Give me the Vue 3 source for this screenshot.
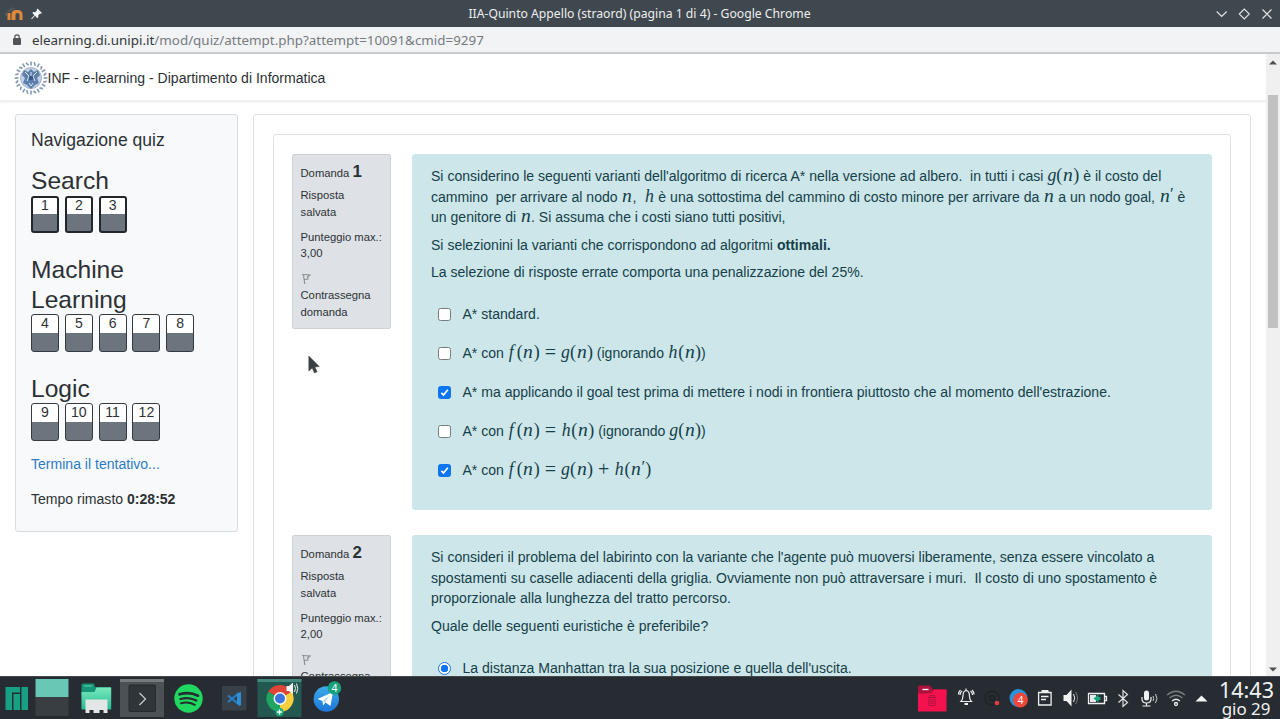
<script setup>
const groups = [
  { name: 'Search', items: [1, 2, 3], current: true },
  { name: 'Machine Learning', items: [4, 5, 6, 7, 8] },
  { name: 'Logic', items: [9, 10, 11, 12] },
]
const petals = Array.from({ length: 24 }, (_, i) => i * 15)
</script>

<template>
  <div class="screen">
    <header class="titlebar">
      <svg class="moodle" viewBox="0 0 20 16"><path d="M2 5 L9 1 L11 3 L5 6" fill="#555" /><path d="M2 6v4" stroke="#666" /><path d="M5 14V7M9 14V8.5Q9 5.5 12 5.5M10 14V8.5Q10 5.5 13.5 5.5T17 8.5V14" fill="none" stroke="#e0883a" stroke-width="3" /></svg>
      <svg class="pin" viewBox="0 0 12 12"><path d="M7 0l5 5-1.4.7-.7-.3-2 2 .1 2-1.1 1.1-2.5-2.5L1 11.8.2 11l3.6-3.6L1.4 5l1.1-1.1 2.1.1 2-2-.3-.8z" fill="#f2f3f4" /></svg>
      <span class="wintitle">IIA-Quinto Appello (straord) (pagina 1 di 4) - Google Chrome</span>
      <svg class="winbtns" viewBox="0 0 56 12" fill="none" stroke="#e3e5e6" stroke-width="1.1"><path d="M.7 3.5l5 5 5-5M23.3 6l5-5 5 5-5 5zM46.5 1.5l9 9M55.500 1.500l-9 9" /></svg>
    </header>
    <div class="urlbar">
      <svg class="lock" viewBox="0 0 8 11"><path d="M1.800 5V3a2.200 2.200 0 0 1 4.400 0v2" fill="none" stroke="#505357" stroke-width="1.200" /><rect y="4" width="8" height="7" rx="1" fill="#505357" /></svg>
      <span class="url"><b>elearning.di.unipi.it</b>/mod/quiz/attempt.php?attempt=10091&amp;cmid=9297</span>
    </div>

    <div class="viewport">
      <div class="page">
        <nav class="sitebar">
          <svg class="seal" viewBox="0 0 34 34">
            <g stroke="#8298b8" stroke-width="1.600" fill="none">
              <path v-for="a in petals" :key="a" :transform="`rotate(${a} 17 17)`" :d="a % 30 ? 'M16 1l2 3' : 'M17 .5v4'" />
            </g>
            <circle cx="17" cy="17" r="10.500" fill="#c3d1e2" stroke="#8fa6c6" stroke-width=".8" />
            <path d="M17 8l3 3 4-2 2 5-3 3 2 5-4 2-4 4-4-4-4-2 2-5-3-3 2-5 4 2z" fill="#5c7fac" />
            <path d="M11 11l4 4-2 5M23 11l-4 4 2 5M17 11v4M15 22l2 3 2-3" stroke="#dce7f3" fill="none" />
            <circle cx="17" cy="17" r="2.200" fill="#34588a" />
          </svg>
          <span>INF - e-learning - Dipartimento di Informatica</span>
        </nav>

        <div class="columns">
          <aside class="quiznav">
            <h5>Navigazione quiz</h5>
            <section v-for="g in groups" :key="g.name">
              <h3>{{ g.name }}</h3>
              <div class="btns" :class="{ current: g.current }">
                <a v-for="n in g.items" :key="n"><span>{{ n }}</span></a>
              </div>
            </section>
            <p class="finish">Termina il tentativo...</p>
            <p class="timer">Tempo rimasto <b>0:28:52</b></p>
          </aside>

          <div class="outer">
            <main class="inner">
              <div class="question first">
                <div class="info">
                  <div class="no">Domanda <b>1</b></div>
                  <div class="state">Risposta<br>salvata</div>
                  <div class="grade">Punteggio max.:<br>3,00</div>
                  <svg class="flag" viewBox="0 0 10 12"><path d="M1 1.500l8 .5-2.500 2L7 6l-4 .5M2.500 2.200L3.800 11" fill="none" stroke="#8b8d90" stroke-width="1.100" /></svg>
                  <div>Contrassegna<br>domanda</div>
                </div>
                <div class="formulation">
                  <p>
                    <span class="ln">Si considerino le seguenti varianti dell'algoritmo di ricerca A* nella versione ad albero.&nbsp; in tutti i casi <i>g</i><u>(</u><i class="n">n</i><u>)</u> è il costo del</span>
                    <span class="ln">cammino&nbsp; per arrivare al nodo <i class="n">n</i>,&nbsp; <i class="h">h</i> è una sottostima del cammino di costo minore per arrivare da <i class="n">n</i> a un nodo goal, <i class="n">n</i><sup>′</sup> è</span>
                    <span class="ln">un genitore di <i class="n">n</i>. Si assuma che i costi siano tutti positivi,</span>
                  </p>
                  <p><span class="ln">Si selezionini la varianti che corrispondono ad algoritmi <b>ottimali.</b></span></p>
                  <p><span class="ln">La selezione di risposte errate comporta una penalizzazione del 25%.</span></p>
                  <div class="answers">
                    <div class="ans"><span class="box"></span><span class="ln">A* standard.</span></div>
                    <div class="ans"><span class="box"></span><span class="ln">A* con <i class="f">f</i><u>(</u><i class="n">n</i><u>)</u><u class="op">=</u><i>g</i><u>(</u><i class="n">n</i><u>)</u> (ignorando <i class="h">h</i><u>(</u><i class="n">n</i><u>)</u>)</span></div>
                    <div class="ans"><span class="box on"><svg viewBox="0 0 12 12"><path d="M2.500 6.300l2.400 2.400L9.600 3" /></svg></span><span class="ln">A* ma applicando il goal test prima di mettere i nodi in frontiera piuttosto che al momento dell'estrazione.</span></div>
                    <div class="ans"><span class="box"></span><span class="ln">A* con <i class="f">f</i><u>(</u><i class="n">n</i><u>)</u><u class="op">=</u><i class="h">h</i><u>(</u><i class="n">n</i><u>)</u> (ignorando <i>g</i><u>(</u><i class="n">n</i><u>)</u>)</span></div>
                    <div class="ans"><span class="box on"><svg viewBox="0 0 12 12"><path d="M2.500 6.300l2.400 2.400L9.600 3" /></svg></span><span class="ln">A* con <i class="f">f</i><u>(</u><i class="n">n</i><u>)</u><u class="op">=</u><i>g</i><u>(</u><i class="n">n</i><u>)</u><u class="op plus">+</u><i class="h">h</i><u>(</u><i class="n">n</i><sup>′</sup><u>)</u></span></div>
                  </div>
                </div>
              </div>

              <div class="question">
                <div class="info">
                  <div class="no">Domanda <b>2</b></div>
                  <div class="state">Risposta<br>salvata</div>
                  <div class="grade">Punteggio max.:<br>2,00</div>
                  <svg class="flag" viewBox="0 0 10 12"><path d="M1 1.500l8 .5-2.500 2L7 6l-4 .5M2.500 2.200L3.800 11" fill="none" stroke="#8b8d90" stroke-width="1.100" /></svg>
                  <div>Contrassegna</div>
                </div>
                <div class="formulation second">
                  <p>
                    <span class="ln">Si consideri il problema del labirinto con la variante che l'agente può muoversi liberamente, senza essere vincolato a</span>
                    <span class="ln">spostamenti su caselle adiacenti della griglia. Ovviamente non può attraversare i muri.&nbsp; Il costo di uno spostamento è</span>
                    <span class="ln">proporzionale alla lunghezza del tratto percorso.</span>
                  </p>
                  <p><span class="ln">Quale delle seguenti euristiche è preferibile?</span></p>
                  <div class="answers">
                    <div class="ans"><span class="radio"></span><span class="ln last">La distanza Manhattan tra la sua posizione e quella dell'uscita.</span></div>
                  </div>
                </div>
              </div>
            </main>
          </div>
        </div>
      </div>
      <div class="scroll">
        <svg viewBox="0 0 8 5"><path d="M0 4.500L4 .500l4 4z" /></svg>
        <div class="thumb"></div>
        <svg class="down" viewBox="0 0 8 5"><path d="M0 .500h8l-4 4z" /></svg>
      </div>
    </div>

    <svg class="cursor" viewBox="0 0 12 19"><path d="M.8 1v15l3.400-3 2.300 5 2.600-1.200-2.200-4.700 4.400-.6z" fill="#3d4043" stroke="#3d4043" stroke-width=".5" /></svg>

    <footer class="taskbar">
      <svg viewBox="0 0 1280 43" width="1280" height="43">
        <rect width="1280" height="43" fill="#262c31" />
        <rect width="1280" height="1" fill="#45484b" />
        <g fill="#18a085"><path d="M5.500 11h14.500v5.500h-8v17.500h-6.500z" /><path d="M13.500 18h6.500v16h-6.500zM21.500 11H28v23h-6.500z" /></g>
        <rect x="35.500" y="3" width="33" height="18" fill="#69c8b5" /><rect x="35.500" y="21" width="33" height="19" fill="#393e43" />
        <linearGradient id="fold" x2="0" y2="1"><stop stop-color="#7ae8bd" /><stop offset="1" stop-color="#25bd91" /></linearGradient>
        <path d="M81.500 9q0-1.500 1.500-1.500h11l1 3.500h16v9H81.500z" fill="#159477" /><path d="M84 10h8" stroke="#65ddb5" />
        <path d="M81.500 16h13l2-4.500h14.700v22H81.500z" fill="url(#fold)" /><path d="M85.500 23.500h22v13.500h-4v-3h-4v3h-6v-3h-4v3h-4z" fill="#e3e6e6" />
        <rect x="120" y="3" width="44" height="38" fill="#4c5156" /><rect x="120" y="3" width="44" height="3" fill="#757a7d" />
        <rect x="129" y="9" width="26.500" height="26.500" rx="1" fill="#303539" stroke="#252a2d" /><path d="M139.500 17l6 6-6 6" fill="none" stroke="#c5c8ca" stroke-width="1.300" />
        <circle cx="188.500" cy="22.500" r="14.200" fill="#20d760" /><g fill="none" stroke="#262c31" stroke-linecap="round"><path d="M179.500 18.300q10-3 18.500 1.400" stroke-width="2.700" /><path d="M180.500 23q8.500-2.300 15.800 1.500" stroke-width="2.300" /><path d="M181 27.300q7-2 13.800 1.500" stroke-width="2" /></g>
        <rect x="222" y="10" width="24.500" height="24.500" rx="1" fill="#394148" /><path d="M239 17v11.500L228 19.500M239 17L228 26" fill="none" stroke="#2382cd" stroke-width="2" /><path d="M237 17.500l4-1.500v13.500L237 28z" fill="#2f8fd8" />
        <rect x="257.500" y="3" width="44" height="38" fill="#22584f" /><rect x="257.500" y="3" width="44" height="3" fill="#42897b" />
        <path d="M280 22.500L268.300 15.700A13.500 13.500 0 0 1 291.700 15.700z" fill="#e04437" />
        <path d="M280 22.500L291.700 15.700A13.500 13.500 0 0 1 280 36z" fill="#f9ce3b" />
        <path d="M280 22.500L280 36A13.500 13.500 0 0 1 268.300 15.700z" fill="#20a460" />
        <circle cx="280" cy="22.500" r="6.500" fill="#f4f7f7" /><circle cx="280" cy="22.500" r="5" fill="#3975dc" />
        <path d="M286.500 10h2.500l4-3.500v12L289 15h-2.500z" fill="#f4f6f6" /><path d="M294.500 9q2 3.500 0 7M296.500 7.500q2.500 5 0 10" stroke="#eee" fill="none" />
        <circle cx="279.500" cy="36" r="4.200" fill="#1aab78" /><path d="M277 36h5M279.500 33.500v5" stroke="#fff" stroke-width="1.300" />
        <linearGradient id="tg" x2="0" y2="1"><stop stop-color="#3cace8" /><stop offset="1" stop-color="#1c76db" /></linearGradient>
        <circle cx="326.300" cy="23" r="12.700" fill="url(#tg)" /><path d="M317.500 23L333 16l-2.500 14-5-3.500-2.500 3-.5-4.500z" fill="#fff" /><path d="M322.500 25l7-5.500-4.500 7" fill="#b6d7f1" />
        <circle cx="334.500" cy="12" r="6.700" fill="#17a27d" /><text x="334.500" y="16" class="num" font-size="10.500">4</text>

        <path d="M918 10.500q0-1 1-1h11l3 4h13.500v7H918z" fill="#ad123e" /><path d="M918 17.500h13l3-4h12.500v22H918z" fill="#f3124e" /><path d="M922.500 13.500h6" stroke="#fff" stroke-width="1.400" /><path d="M928 21.500h8M930 21v-1.500h4V21M929 22.500v7h6v-7M931 23v5M933 23v5" stroke="#ad123e" fill="none" />
        <g fill="none" stroke="#eef0f1" stroke-width="1.200">
          <path d="M961 25.500q2-2 2-6 0-4.500 3.200-5 3.200.5 3.200 5 0 4 2 6zM966 12.500v2M962 15q-2 1.500-2 4M970.500 15q2 1.500 2 4M960.500 14q-2 1.800-2 4.500M972 14q2 1.800 2 4.500" /><path d="M964.500 28h3.500" stroke-width="2" />
        </g>
        <circle cx="992" cy="22" r="7" fill="none" stroke="#1e2428" stroke-width="1.500" /><circle cx="992" cy="22" r="2.500" fill="none" stroke="#1e2327" stroke-width="1.500" /><circle cx="997" cy="27" r="2.300" fill="#e23c45" />
        <circle cx="1018.500" cy="22" r="9" fill="#2793dc" /><circle cx="1020.500" cy="24" r="7.400" fill="#ee4638" /><text x="1020.500" y="28" class="num" font-size="10.500">4</text>
        <g fill="none" stroke="#eef0f1" stroke-width="1.300">
          <path d="M1038.600 16.500h12.500v12.500h-12.500zM1041 20.500h7.500M1041 23.500h5" /><path d="M1041.500 15.500h7" stroke-width="3" />
        </g>
        <path d="M1063.500 19h3l5-5.500v17l-5-5.500h-3z" fill="#f0f2f2" /><path d="M1073.500 18q2.500 4 0 8" fill="none" stroke="#eee" /><path d="M1075.500 16q4 6 0 12" fill="none" stroke="#71777b" />
        <path d="M1088.500 17.500h16v10h-16zM1105 20.500h1.500v4h-1.500" fill="none" stroke="#f0f2f2" stroke-width="1.300" /><path d="M1090 19h6v7h-6z" fill="#e7eaea" /><path d="M1093.500 22.500l5-4v2.500h2v3h-2v2.500z" fill="#16a77d" />
        <path d="M1118.500 18.500l9 8-4.500 4v-16l4.500 4-9 8" fill="none" stroke="#dfe3e4" stroke-width="1.200" />
        <rect x="1144" y="14.500" width="5" height="10" rx="2.500" fill="#eef0f1" /><path d="M1142 21v2q0 4 4.500 4t4.500-4v-2M1146.500 27v2.500M1142.500 30h8" fill="none" stroke="#eef0f1" stroke-width="1.200" /><path d="M1153 20q1.500 2.500 0 5M1155.500 18q3 4.500 0 9" fill="none" stroke="#c9ced1" />
        <g fill="none" stroke="#777d81" stroke-width="1.300"><path d="M1167 19q9-7.500 18 0M1169.500 22q6.500-5.500 13 0" /><path d="M1172 25q4-3.500 8 0" stroke="#dfe3e4" /><circle cx="1176" cy="28" r="1.500" stroke="#eef0f1" /></g>
        <path d="M1195.500 25.500l6-6 6 6z" fill="#f3f4f4" />
        <text x="1246.500" y="22" class="clock" font-size="21.500">14:43</text>
        <text x="1246" y="39" class="clock" font-size="16.900">gio 29</text>
      </svg>
    </footer>
  </div>
</template>

<style>
html, body { overflow: hidden; background: #fff; }
</style>
<style scoped>
.screen { width: 1280px; height: 719px; display: flex; flex-direction: column; position: relative; overflow: hidden; font-family: "Liberation Sans", Arial, sans-serif; font-size: 14.06px; color: #2c3135; }
.screen * { box-sizing: border-box; }
h3, h5, p { margin: 0; font-weight: 400; }
.titlebar { height: 27px; background: #40484f; display: flex; align-items: center; padding: 0 8px 0 4px; flex: none; }
.moodle { width: 20px; height: 16px; }
.pin { width: 11px; height: 12px; margin-left: 7px; }
.wintitle { font: 12.2px "Noto Sans", sans-serif; color: #eceeef; flex: 1; text-align: center; padding-left: 21px; white-space: nowrap; }
.winbtns { width: 56px; height: 12px; }
.urlbar { height: 27px; flex: none; background: #f1f3f5; border-bottom: 2px solid #c8cbcd; display: flex; align-items: center; padding-left: 13px; }
.lock { width: 8px; height: 11px; }
.url { font: 13.400px "Noto Sans", sans-serif; color: #777b7f; margin-left: 11px; white-space: nowrap; }
.url b { font-weight: 400; color: #33373a; }
.viewport { height: 622px; flex: none; display: flex; overflow: hidden; }
.page { width: 1266px; height: 622px; overflow: hidden; }
.sitebar { height: 47px; display: flex; align-items: center; padding: 1px 0 0 14px; box-shadow: 0 1px 3px rgba(0,0,0,.1); border-bottom: 1px solid #f0f0f0; white-space: nowrap; }
.seal { width: 34px; height: 34px; margin-right: -.5px; }
.columns { display: flex; align-items: flex-start; padding: 13px 15px 0; gap: 15px; }
.quiznav { width: 223px; height: 418px; border: 1px solid #d9dcdf; border-radius: 3px; background: #f8f9fb; padding: 15px 15px 0; }
h5 { font-size: 17.57px; line-height: 21px; height: 36px; }
h3 { font-size: 24.6px; line-height: 29.5px; width: 150px; }
.btns { display: flex; gap: 5.8px; height: 38px; margin-bottom: 21.700px; }
.btns a { width: 28px; height: 37.500px; border: 1px solid #343a40; border-radius: 3px; text-align: center; background: linear-gradient(#fff 0 50%, #6c757d 50%); line-height: 17px; flex: none; }
.btns.current a { border: 2px solid #22272b; line-height: 15px; }
.finish { color: #2c7bc4; line-height: 21px; margin-top: -9.500px; }
.timer { line-height: 21px; margin-top: 14px; }
.outer { width: 998px; height: 900px; border: 1px solid #dfe1e3; border-radius: 3px; padding: 19px; }
.inner { width: 958px; height: 800px; border: 1px solid #dfe1e3; border-radius: 3px; padding: 19px 18px; }
.question { display: flex; align-items: flex-start; gap: 21px; margin-bottom: 25px; }
.info { width: 99px; height: 175px; background: #dee1e6; border: 1px solid #cdd2d7; border-radius: 2px; padding: 6.500px 7.500px; font-size: 11.25px; line-height: 16.800px; white-space: nowrap; flex: none; }
.no { height: 25.500px; line-height: 20px; }
.no b { font-size: 16.900px; }
.state, .grade { margin-bottom: 8px; }
.flag { display: block; width: 10px; height: 12px; margin: 11.300px 0 2px; }
.formulation { width: 799.500px; height: 356px; background: #cde6e9; border-radius: 3px; padding: 12px 19px; color: #153f49; flex: none; }
.formulation p { margin-bottom: 6.700px; }
.ln { display: block; white-space: nowrap; line-height: 20.700px; height: 20.700px; }
i { font: italic 17.800px "Liberation Serif", serif; line-height: 10px; }
.n { display: inline-block; width: 9.800px; margin: 0 .6px; transform: scaleX(1.1); transform-origin: left; }
.h { padding: 0 .7px; }
.f { padding: 0 3px 0 1px; }
u { font: 18px "Liberation Serif", serif; line-height: 10px; text-decoration: none; }
.op { padding: 0 5px; font-size: 20px; vertical-align: -1px; }
sup { font: 17px "Liberation Serif", serif; line-height: 5px; vertical-align: 3px; padding: 0; }
.answers { padding-top: 5.500px; }
.ans { display: flex; align-items: center; height: 38.900px; padding-left: 7px; }
.box { width: 13px; height: 13px; border: 1px solid #777e82; border-radius: 2.500px; background: #fff; margin-right: 11.500px; flex: none; display: flex; }
.box.on { background: #0b75f4; border-color: #0b75f4; }
.box svg { width: 11px; height: 11px; fill: none; stroke: #fff; stroke-width: 1.900; }
.radio { width: 13px; height: 13px; border: 1px solid #1675ed; border-radius: 50%; background: radial-gradient(circle, #0b75f4 0 3.500px, #fff 4px); margin-right: 11.500px; flex: none; }
.scroll { width: 14px; background: #f0f0f1; display: flex; flex-direction: column; align-items: center; padding: 6px 0 4px; }
.scroll svg { width: 8px; height: 5px; fill: #505050; flex: none; }
.scroll .thumb { width: 10px; height: 233px; background: #c1c1c1; margin-top: 30px; flex: none; }
.scroll .down { margin-top: auto; }
.cursor { position: absolute; left: 308px; top: 355px; width: 12px; height: 19px; }
.taskbar { height: 43px; flex: none; }
.taskbar svg { display: block; }
.num { font-family: "Noto Sans", sans-serif; fill: #fff; text-anchor: middle; }
.clock { font-family: "Noto Sans", sans-serif; fill: #f1f2f2; text-anchor: middle; }
</style>
